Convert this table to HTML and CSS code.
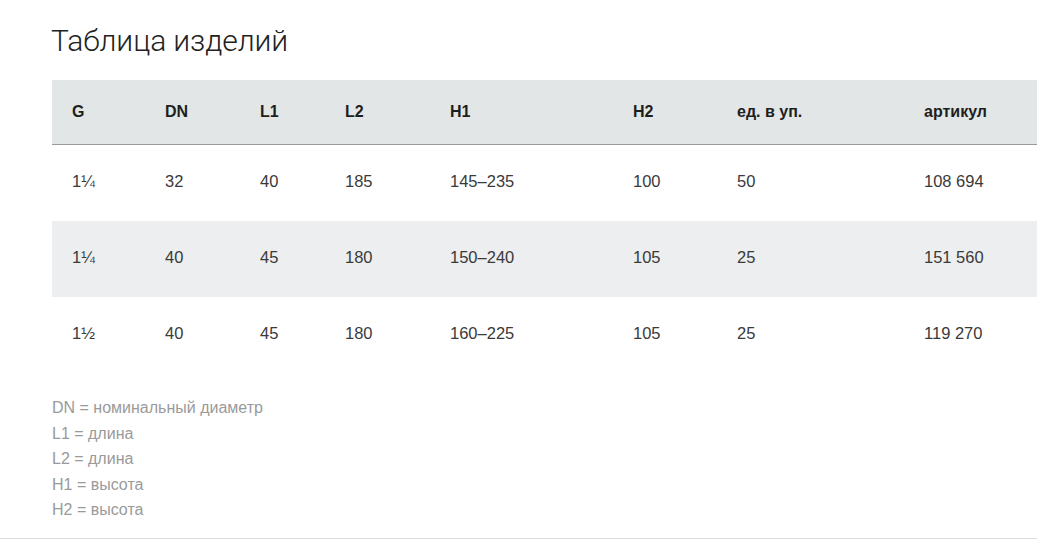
FILE: index.html
```html
<!DOCTYPE html>
<html lang="ru">
<head>
<meta charset="utf-8">
<title>Таблица изделий</title>
<link rel="stylesheet" href="styles.css">
</head>
<body>
<div class="page">
  <h2 class="title">Таблица изделий</h2>
  <table class="products">
    <colgroup>
      <col class="c-g"><col class="c-dn"><col class="c-l1"><col class="c-l2"><col class="c-h1"><col class="c-h2"><col class="c-pack"><col class="c-art">
    </colgroup>
    <thead>
      <tr><th>G</th><th>DN</th><th>L1</th><th>L2</th><th>H1</th><th>H2</th><th>ед. в уп.</th><th>артикул</th></tr>
    </thead>
    <tbody>
      <tr><td>1¼</td><td>32</td><td>40</td><td>185</td><td>145–235</td><td>100</td><td>50</td><td>108 694</td></tr>
      <tr class="alt"><td>1¼</td><td>40</td><td>45</td><td>180</td><td>150–240</td><td>105</td><td>25</td><td>151 560</td></tr>
      <tr><td>1½</td><td>40</td><td>45</td><td>180</td><td>160–225</td><td>105</td><td>25</td><td>119 270</td></tr>
    </tbody>
  </table>
  <ul class="legend">
    <li>DN = номинальный диаметр</li>
    <li>L1 = длина</li>
    <li>L2 = длина</li>
    <li>H1 = высота</li>
    <li>H2 = высота</li>
  </ul>
</div>
<div class="rule"></div>
</body>
</html>
```

FILE: styles.css
```css
html, body {
  margin: 0;
  padding: 0;
  background: #fff;
}
body {
  font-family: "Liberation Sans", Arial, sans-serif;
  color: #333;
}
.page {
  padding-left: 52px;
}
.title {
  margin: 0;
  padding-top: 24px;
  font-family: Roboto, "Liberation Sans", sans-serif;
  font-weight: 300;
  font-size: 30px;
  line-height: 34px;
  color: #222;
  letter-spacing: -0.1px;
  margin-left: -1px;
}
.products {
  margin-top: 22px;
  width: 100%;
  border-collapse: collapse;
  table-layout: fixed;
}
.c-g { width: 93px; }
.c-dn { width: 95px; }
.c-l1 { width: 85px; }
.c-l2 { width: 105px; }
.c-h1 { width: 183px; }
.c-h2 { width: 104px; }
.c-pack { width: 187px; }
.products th {
  background: #e2e6e6;
  height: 64px;
  padding: 0 0 0 20px;
  text-align: left;
  font-weight: bold;
  font-size: 16px;
  color: #1e1e1e;
  border-bottom: 1px solid #9a9a9a;
}
.products td {
  height: 73px;
  padding: 0 0 3px 20px;
  font-size: 16.5px;
  color: #3a3a3a;
}
.products tr.alt td {
  background: #eceeef;
}
.legend {
  list-style: none;
  margin: 22px 0 0;
  padding: 0;
  font-size: 16px;
  line-height: 25.5px;
  color: #9a9a9a;
}
.rule {
  margin-top: 15px;
  border-top: 1px solid #dcdcdc;
}
```
